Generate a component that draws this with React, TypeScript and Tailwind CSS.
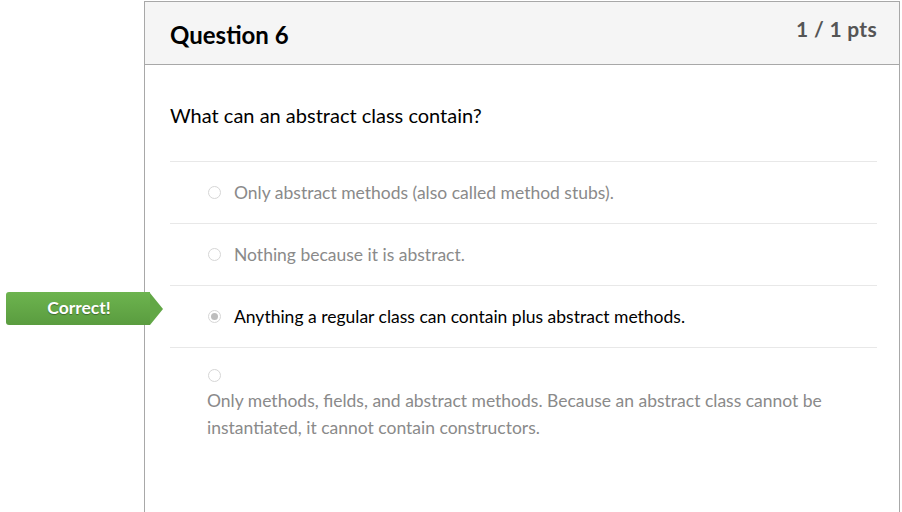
const options = [
  { text: 'Only abstract methods (also called method stubs).', selected: false },
  { text: 'Nothing because it is abstract.', selected: false },
  { text: 'Anything a regular class can contain plus abstract methods.', selected: true, correct: true },
]

function Radio({ selected }: { selected?: boolean }) {
  return (
    <span className="flex h-[13px] w-[13px] shrink-0 items-center justify-center rounded-full border border-[#d6d6d6] bg-white">
      {selected && <span className="h-[7px] w-[7px] rounded-full bg-[#bdbdbd]" />}
    </span>
  )
}

function CorrectBadge() {
  return (
    <div className="absolute left-[-164px] top-[6px] flex h-[33px] items-center">
      <div className="flex h-[33px] w-[144px] items-center justify-center rounded-l-[3px] bg-gradient-to-b from-[#6db44f] to-[#5a9c3f] pl-[2px] text-[17.5px] font-bold text-white [text-shadow:0_1px_1px_rgba(0,0,0,0.35)]">
        Correct!
      </div>
      <div className="h-0 w-0 border-y-[16.5px] border-l-[13px] border-y-transparent border-l-[#62a746]" />
    </div>
  )
}

export default function App() {
  return (
    <div className="h-[512px] overflow-hidden bg-white font-['Lato','Liberation_Sans',sans-serif] text-[#2d3b45]">
      <div className="ml-[144px] mt-[1px] min-h-[511px] w-[756px] border border-b-0 border-[#a8a8a8]">
        <div className="flex h-[63px] justify-between border-b border-[#a8a8a8] bg-[#f5f5f5] pl-[25px] pr-[22px]">
          <h2 className="pt-[18px] text-[24px] font-bold leading-[30px] text-black">Question 6</h2>
          <div className="pt-[13px] text-[21px] font-bold leading-[28px] tracking-[0.3px] text-[#555]">1 / 1 pts</div>
        </div>
        <div className="pl-[25px] pr-[22px]">
          <p className="pt-[37px] text-[20px] leading-[27px] text-black">What can an abstract class contain?</p>
          <div className="mt-[32px]">
            {options.map((o) => (
              <div
                key={o.text}
                className="relative flex h-[62px] items-center gap-[13px] border-t border-[#e8e8e8] pl-[38px]"
              >
                {o.correct && <CorrectBadge />}
                <Radio selected={o.selected} />
                <span className={`text-[17.5px] leading-[27px] ${o.selected ? 'text-black' : 'text-[#8a8a8a]'}`}>
                  {o.text}
                </span>
              </div>
            ))}
            <div className="border-t border-[#e8e8e8] pl-[37px] pt-[21px]">
              <div className="pl-[1px]">
                <Radio />
              </div>
              <p className="mt-[5px] text-[17.5px] leading-[27px] text-[#8a8a8a]">
                Only methods, fields, and abstract methods. Because an abstract class cannot be instantiated, it
                cannot contain constructors.
              </p>
            </div>
          </div>
        </div>
      </div>
    </div>
  )
}
